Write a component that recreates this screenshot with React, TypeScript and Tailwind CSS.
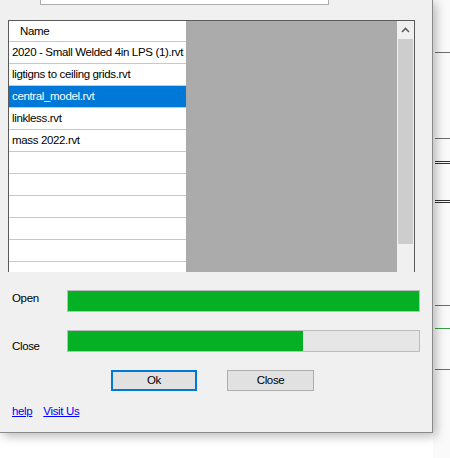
import React from "react";

const files = [
  "2020 - Small Welded 4in LPS (1).rvt",
  "ligtigns to ceiling grids.rvt",
  "central_model.rvt",
  "linkless.rvt",
  "mass 2022.rvt",
  "",
  "",
  "",
  "",
  "",
  "",
];

export default function App() {
  return (
    <div className="w-[450px] h-[458px] bg-white flex overflow-hidden text-[11.5px] tracking-[-0.35px] text-black whitespace-nowrap font-['Liberation_Sans',Arial,sans-serif]">
      {/* Dialog column */}
      <div className="w-[433px] flex flex-col relative z-10">
        <div className="h-[433px] bg-[#f0f0f0] border-r border-b border-[#8a8a8a] shadow-[3px_3px_10px_rgba(0,0,0,0.28)] flex flex-col">
          {/* top text box */}
          <div className="ml-[40px] w-[289px] h-[5px] bg-white border border-t-0 border-[#adadad]" />

          {/* grid */}
          <div className="mt-[15px] ml-[8px] w-[407px] h-[252px] flex border-l border-t border-r border-[#5a5a5a] overflow-hidden">
            <div className="w-[177px] bg-white flex flex-col shrink-0">
              <div className="h-[21px] shrink-0 border-b border-[#c8c8c8] flex items-center pl-[11px] pt-[1px]">Name</div>
              {files.map((f, i) => (
                <div
                  key={i}
                  className={
                    i === 2
                      ? "h-[22px] shrink-0 border-b border-[#c8c8c8] flex items-center pl-[3px] bg-[#0078d7] text-white"
                      : "h-[22px] shrink-0 border-b border-[#c8c8c8] flex items-center pl-[3px]"
                  }
                >
                  {f}
                </div>
              ))}
            </div>
            <div className="flex-1 bg-[#ababab]" />
            <div className="w-[17px] bg-[#f0f0f0] flex flex-col shrink-0">
              <div className="h-[18px] flex items-center justify-center">
                <svg width="9" height="6" viewBox="0 0 9 6">
                  <path d="M1 5 L4.5 1.5 L8 5" fill="none" stroke="#606060" strokeWidth="1.6" />
                </svg>
              </div>
              <div className="h-[205px] mx-[1px] bg-[#cdcdcd]" />
            </div>
          </div>

          {/* progress */}
          <div className="mt-[18px] flex items-start">
            <div className="w-[67px] pl-[12px] mt-[1px] leading-[15px]">Open</div>
            <div className="w-[353px] h-[22px] bg-[#06b025] border border-[#bcbcbc]" />
          </div>
          <div className="mt-[18px] flex items-start">
            <div className="w-[67px] pl-[12px] mt-[9px] leading-[15px]">Close</div>
            <div className="w-[353px] h-[22px] bg-[#e6e6e6] border border-[#bcbcbc] flex">
              <div className="w-[235px] h-full bg-[#06b025]" />
            </div>
          </div>

          {/* buttons */}
          <div className="mt-[16px] flex">
            <button className="ml-[111px] w-[86px] h-[21px] bg-[#e1e1e1] border-2 border-[#0078d7] flex items-center justify-center leading-none">
              Ok
            </button>
            <button className="ml-[30px] w-[87px] h-[21px] bg-[#e1e1e1] border border-[#adadad] flex items-center justify-center leading-none">
              Close
            </button>
          </div>

          {/* links */}
          <div className="mt-[13px] pl-[12px] flex gap-[11px] leading-[15px]">
            <a className="text-[#0000ff] underline">help</a>
            <a className="text-[#0000ff] underline">Visit Us</a>
          </div>
        </div>
      </div>

      {/* background app strip */}
      <div className="flex-1 bg-[#fafafa] flex flex-col pl-[2px]">
        <div className="h-[52px]" />
        <div className="h-[1px] bg-[#6e6e6e]" />
        <div className="h-[85px]" />
        <div className="h-[1px] bg-[#6e6e6e]" />
        <div className="h-[22px]" />
        <div className="h-[1px] bg-[#303030]" />
        <div className="h-[1px]" />
        <div className="h-[1px] bg-[#303030]" />
        <div className="h-[36px]" />
        <div className="h-[1px] bg-[#303030]" />
        <div className="h-[1px]" />
        <div className="h-[1px] bg-[#303030]" />
        <div className="h-[102px]" />
        <div className="h-[1px] bg-[#5e7a5e]" />
        <div className="h-[22px]" />
        <div className="h-[1px] bg-[#3aa04a]" />
        <div className="h-[40px]" />
        <div className="h-[1px] bg-[#6e6e6e]" />
      </div>
    </div>
  );
}
